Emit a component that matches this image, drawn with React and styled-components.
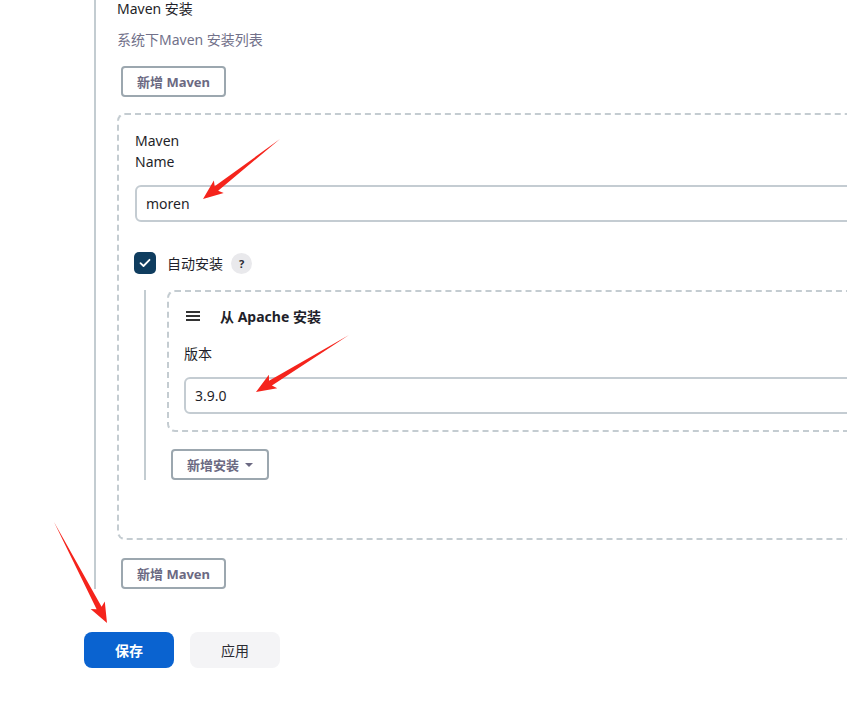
import React from "react";
import styled, { createGlobalStyle } from "styled-components";

const GlobalStyle = createGlobalStyle`
  html, body {
    margin: 0;
    padding: 0;
    overflow: hidden;
    background: #fff;
  }
  body {
    font-family: "Noto Sans", "Noto Sans CJK SC", sans-serif;
    color: #1f1f2a;
    font-size: 14px;
  }
`;

const Page = styled.div`
  position: relative;
  width: 1100px;
  height: 706px;
  padding-left: 84px;
  box-sizing: border-box;
`;

const Section = styled.div`
  margin-left: 10px;
  border-left: 2px solid #c3ccd1;
  padding-left: 21px;
  display: flex;
  flex-direction: column;
  align-items: flex-start;
`;

const Title = styled.div`
  margin-top: -1px;
  line-height: 20px;
  font-size: 14px;
`;

const Description = styled.div`
  margin-top: 11px;
  line-height: 20px;
  font-size: 14px;
  color: #72718a;
`;

const OutlineButton = styled.button`
  margin-top: ${(p) => p.$top || 0}px;
  margin-left: 4px;
  height: 31px;
  padding: 0 ${(p) => p.$pad || 14}px;
  border: 2px solid #9ca7af;
  border-radius: 4px;
  background: #fff;
  color: #6b6982;
  font-family: inherit;
  font-size: 13px;
  font-weight: 700;
  display: flex;
  align-items: center;
  gap: 6px;
  box-sizing: border-box;
`;

const Caret = styled.span`
  width: 0;
  height: 0;
  border-left: 4px solid transparent;
  border-right: 4px solid transparent;
  border-top: 4px solid #6b6982;
`;

const DashedBox = styled.div`
  align-self: stretch;
  margin-top: ${(p) => p.$top || 0}px;
  border: 2px dashed #c4ccd1;
  border-radius: 8px;
  padding: ${(p) => p.$pad};
  display: flex;
  flex-direction: column;
  align-items: flex-start;
`;

const FieldLabel = styled.div`
  width: ${(p) => (p.$narrow ? "50px" : "auto")};
  line-height: 21px;
  font-size: 14px;
  margin-bottom: ${(p) => p.$gap || 13}px;
`;

const TextInput = styled.div`
  align-self: stretch;
  height: 37px;
  border: 2px solid #c4ccd2;
  border-radius: 6px;
  padding: 0 9px;
  display: flex;
  align-items: center;
  font-size: 14px;
  box-sizing: border-box;
`;

const CheckRow = styled.div`
  margin-top: 30px;
  margin-left: -1px;
  display: flex;
  align-items: center;
  gap: 11px;
  height: 22px;
`;

const CheckBox = styled.span`
  width: 22px;
  height: 22px;
  border-radius: 5px;
  background: #0f3d5f;
  display: flex;
  align-items: center;
  justify-content: center;
`;

const HelpIcon = styled.span`
  width: 21px;
  height: 21px;
  border-radius: 50%;
  background: #e9e9ec;
  color: #2a2a33;
  font-size: 11px;
  font-weight: 700;
  display: flex;
  align-items: center;
  justify-content: center;
  margin-left: -3px;
`;

const Repeated = styled.div`
  align-self: stretch;
  margin-top: 16px;
  margin-left: 9px;
  border-left: 2px solid #c3ccd1;
  padding-left: 21px;
  display: flex;
  flex-direction: column;
  align-items: flex-start;
`;

const ItemHeader = styled.div`
  display: flex;
  align-items: center;
  gap: 20px;
  height: 20px;
  margin-left: 2px;
  margin-bottom: 17px;
  font-weight: 700;
  font-size: 14px;
`;

const Hamburger = styled.span`
  width: 14px;
  display: flex;
  flex-direction: column;
  gap: 2px;
  span {
    height: 2px;
    background: #333;
  }
`;

const Actions = styled.div`
  margin-top: 43px;
  display: flex;
  gap: 16px;
`;

const ActionButton = styled.button`
  width: 90px;
  height: 36px;
  border: none;
  border-radius: 8px;
  font-family: inherit;
  font-size: 14px;
  font-weight: ${(p) => (p.$primary ? 700 : 400)};
  background: ${(p) => (p.$primary ? "#0a63d0" : "#f4f4f6")};
  color: ${(p) => (p.$primary ? "#fff" : "#2b2b33")};
`;

const Overlay = styled.svg`
  position: absolute;
  left: 0;
  top: 0;
  pointer-events: none;
`;

function arrowPoints(tail, tip, len, head, shaft) {
  const dx = tip[0] - tail[0];
  const dy = tip[1] - tail[1];
  const d = Math.hypot(dx, dy);
  const ux = dx / d;
  const uy = dy / d;
  const nx = -uy;
  const ny = ux;
  const bx = tip[0] - ux * len;
  const by = tip[1] - uy * len;
  const pts = [
    [tail[0], tail[1]],
    [bx + nx * shaft, by + ny * shaft],
    [bx - ux * 3 + nx * head, by - uy * 3 + ny * head],
    [tip[0], tip[1]],
    [bx - ux * 3 - nx * head, by - uy * 3 - ny * head],
    [bx - nx * shaft, by - ny * shaft],
  ];
  return pts.map((p) => p.join(",")).join(" ");
}

const arrows = [
  { tail: [280, 139], tip: [203, 199] },
  { tail: [349, 335], tip: [256, 392] },
  { tail: [54, 522], tip: [107, 623] },
];

export default function App() {
  return (
    <>
      <GlobalStyle />
      <Page>
        <Section>
          <Title>Maven 安装</Title>
          <Description>系统下Maven 安装列表</Description>
          <OutlineButton $top={16}>新增 Maven</OutlineButton>
          <DashedBox $top={16} $pad="15px 16px 58px 16px">
            <FieldLabel $narrow>Maven Name</FieldLabel>
            <TextInput>moren</TextInput>
            <CheckRow>
              <CheckBox>
                <svg width="12" height="10" viewBox="0 0 12 10">
                  <path d="M1.5 5.2 L4.5 8 L10.5 1.8" fill="none" stroke="#fff" strokeWidth="1.8" strokeLinecap="round" strokeLinejoin="round" />
                </svg>
              </CheckBox>
              <span>自动安装</span>
              <HelpIcon>?</HelpIcon>
            </CheckRow>
            <Repeated>
              <DashedBox $pad="14px 16px 16px 15px">
                <ItemHeader>
                  <Hamburger>
                    <span />
                    <span />
                    <span />
                  </Hamburger>
                  从 Apache 安装
                </ItemHeader>
                <FieldLabel $gap={13}>版本</FieldLabel>
                <TextInput>3.9.0</TextInput>
              </DashedBox>
              <OutlineButton $top={17} $pad={14}>
                新增安装 <Caret />
              </OutlineButton>
            </Repeated>
          </DashedBox>
          <OutlineButton $top={18}>新增 Maven</OutlineButton>
        </Section>
        <Actions>
          <ActionButton $primary>保存</ActionButton>
          <ActionButton>应用</ActionButton>
        </Actions>
        <Overlay width="847" height="706">
          {arrows.map((a, i) => (
            <polygon key={i} points={arrowPoints(a.tail, a.tip, 17, 8, 2.8)} fill="#f5241c" />
          ))}
        </Overlay>
      </Page>
    </>
  );
}
